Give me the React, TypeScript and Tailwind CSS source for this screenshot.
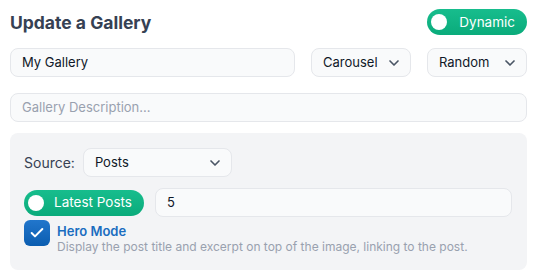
import { ChevronDown, Check } from 'lucide-react';

function Toggle({ label, width }: { label: string; width: string }) {
  return (
    <div
      className={`flex items-center justify-between h-[26px] ${width} rounded-full bg-gradient-to-b from-[#17bd8d] to-[#0aab7b] pl-[4px] pr-[12px]`}
    >
      <span className="w-[16px] h-[16px] rounded-full bg-white shrink-0" />
      <span className="text-white text-[13.5px] whitespace-nowrap">{label}</span>
    </div>
  );
}

function Select({ value, width }: { value: string; width: string }) {
  return (
    <div
      className={`flex items-center justify-between h-[29px] ${width} rounded-lg border border-gray-200 bg-gray-50 pl-[11px] pr-[8px] text-[13px] text-gray-900`}
    >
      <span>{value}</span>
      <ChevronDown className="w-[16px] h-[16px] text-gray-600" strokeWidth={2.5} />
    </div>
  );
}

export default function App() {
  return (
    <div className="w-[538px] h-[277px] bg-white px-[10px] pt-[9px] font-['Inter',sans-serif]">
      <div className="flex items-center justify-between h-[26px] pr-[1px]">
        <h1 className="text-[17.5px] font-bold text-gray-700 leading-none mt-[1px]">Update a Gallery</h1>
        <Toggle label="Dynamic" width="w-[100px]" />
      </div>

      <div className="flex items-center gap-[16px] mt-[13px] pr-[1px]">
        <div className="flex items-center h-[29px] flex-1 rounded-lg border border-gray-200 bg-gray-50 px-[11px] text-[13px] text-gray-900">
          My Gallery
        </div>
        <Select value="Carousel" width="w-[100px]" />
        <Select value="Random" width="w-[100px]" />
      </div>

      <div className="flex items-center h-[29px] mt-[16px] mr-[1px] rounded-lg border border-gray-200 bg-gray-50 px-[11px] text-[13px] text-gray-400">
        Gallery Description...
      </div>

      <div className="mt-[11px] mr-[1px] rounded-lg bg-gray-100 pl-[14px] pr-[15px] pt-[15px] pb-[16px]">
        <div className="flex items-center gap-[8px]">
          <span className="text-[14px] text-gray-700">Source:</span>
          <div className="flex items-center justify-between h-[29px] w-[149px] rounded-lg border border-gray-200 bg-gray-50 pl-[11px] pr-[8px] text-[13px] text-gray-900">
            <span>Posts</span>
            <ChevronDown className="w-[16px] h-[16px] text-gray-600" strokeWidth={2.5} />
          </div>
        </div>

        <div className="flex items-center gap-[11px] mt-[11px]">
          <Toggle label="Latest Posts" width="w-[120px]" />
          <div className="flex items-center h-[29px] flex-1 rounded-lg border border-gray-200 bg-gray-50 px-[11px] text-[13px] text-gray-900">
            5
          </div>
        </div>

        <div className="flex items-start gap-[7px] mt-[3px]">
          <div className="w-[26px] h-[26px] rounded-md bg-gradient-to-b from-[#2176cc] to-[#0a5db0] flex items-center justify-center shrink-0">
            <Check className="w-[16px] h-[16px] text-white" strokeWidth={3} />
          </div>
          <div className="flex flex-col">
            <span className="text-[13px] font-semibold text-[#1a6dc0] leading-[18px] mt-[2px]">Hero Mode</span>
            <span className="text-[12px] text-gray-400 leading-[14px]">
              Display the post title and excerpt on top of the image, linking to the post.
            </span>
          </div>
        </div>
      </div>
    </div>
  );
}
